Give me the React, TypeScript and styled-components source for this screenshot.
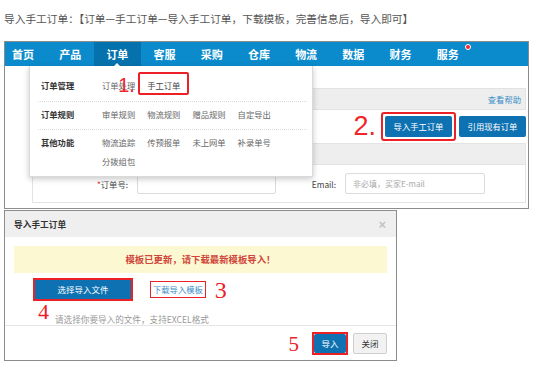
import styled, { createGlobalStyle } from 'styled-components';

const GlobalStyle = createGlobalStyle`
  html, body {
    margin: 0;
    padding: 0;
    background: #ffffff;
  }
  body {
    width: 554px;
    height: 369px;
    overflow: hidden;
    font-family: 'Noto Sans CJK SC', 'Noto Sans', sans-serif;
  }
  * {
    box-sizing: border-box;
  }
`;

const navItems = ['首页', '产品', '订单', '客服', '采购', '仓库', '物流', '数据', '财务', '服务'];

const menuGroups = [
  { title: '订单管理', items: ['订单处理', '手工订单'] },
  { title: '订单规则', items: ['审单规则', '物流规则', '赠品规则', '自定导出'] },
  { title: '其他功能', items: ['物流追踪', '传预报单', '未上网单', '补录单号', '分拨组包'] },
];

const App = () => {
  return (
    <>
      <GlobalStyle />
      <Page>
        <Intro>导入手工订单：【订单—手工订单—导入手工订单，下载模板，完善信息后，导入即可】</Intro>

        <ShotFrame>
          <NavBar>
            {navItems.map((name, index) => (
              <NavItem key={name} $active={name === '订单'} $first={index === 0}>
                {name}
                {name === '服务' && <RedDot />}
              </NavItem>
            ))}
          </NavBar>

          <ShotBody>
            <Content>
              <HelpBar>
                <HelpLink>查看帮助</HelpLink>
              </HelpBar>

              <ButtonRow>
                <StepNumber>2.</StepNumber>
                <RedBox>
                  <BlueButton $width={67}>导入手工订单</BlueButton>
                </RedBox>
                <BlueButton $width={67}>引用现有订单</BlueButton>
              </ButtonRow>

              <FormPanel>
                <PanelHeader />
                <FormRow>
                  <FieldLabel $width={95}>
                    <Required>*</Required>订单号:
                  </FieldLabel>
                  <TextInput $width={139} />
                  <FieldLabel $width={60}>Email:</FieldLabel>
                  <TextInput $width={140}>非必填，买家E-mail</TextInput>
                </FormRow>
              </FormPanel>
            </Content>

            <Dropdown>
              {menuGroups.map((group, index) => (
                <MenuGroup key={group.title} $last={index === menuGroups.length - 1}>
                  <MenuTitle>{group.title}</MenuTitle>
                  <MenuItems>
                    {group.items.map((item) => (
                      <MenuItem key={item} $marked={item === '手工订单'}>
                        {item}
                        {item === '手工订单' && <StepOne>1.</StepOne>}
                      </MenuItem>
                    ))}
                  </MenuItems>
                </MenuGroup>
              ))}
            </Dropdown>
          </ShotBody>
        </ShotFrame>

        <Dialog>
          <DialogHeader>
            <DialogTitle>导入手工订单</DialogTitle>
            <CloseMark>×</CloseMark>
          </DialogHeader>

          <DialogBody>
            <Banner>模板已更新，请下载最新模板导入！</Banner>

            <UploadRow>
              <RedBox $thin>
                <FileButton>选择导入文件</FileButton>
              </RedBox>
              <LinkBox>下载导入模板</LinkBox>
              <SerifNumber $size={24}>3</SerifNumber>
            </UploadRow>

            <HintRow>
              <SerifNumber $size={22}>4</SerifNumber>
              <Hint>请选择你要导入的文件，支持EXCEL格式</Hint>
            </HintRow>
          </DialogBody>

          <DialogFooter>
            <SerifNumber $size={21}>5</SerifNumber>
            <RedBox $thin>
              <FooterButton $primary>导入</FooterButton>
            </RedBox>
            <FooterButton>关闭</FooterButton>
          </DialogFooter>
        </Dialog>
      </Page>
    </>
  );
};

const Page = styled.div`
  padding: 12px 0 0 4px;
`;

const Intro = styled.div`
  height: 14px;
  line-height: 14px;
  font-size: 10.7px;
  color: #555;
  white-space: nowrap;
`;

const ShotFrame = styled.div`
  margin-top: 15px;
  width: 525px;
  border: 1px solid #8c8c8c;
  background: #fff;
`;

const NavBar = styled.div`
  display: flex;
  height: 24px;
  background: #0b8bcc;
`;

const NavItem = styled.div<{ $active?: boolean; $first?: boolean }>`
  position: relative;
  padding: 0 12.6px 0 ${(p) => (p.$first ? '7px' : '12.6px')};
  line-height: 24px;
  font-size: 11px;
  font-weight: 700;
  color: #fff;
  background: ${(p) => (p.$active ? '#0672ad' : 'transparent')};

  &::after {
    content: '';
    display: ${(p) => (p.$active ? 'block' : 'none')};
    position: absolute;
    left: 50%;
    bottom: 0;
    margin-left: -3px;
    border-left: 3px solid transparent;
    border-right: 3px solid transparent;
    border-bottom: 3px solid #fff;
  }
`;

const RedDot = styled.span`
  position: absolute;
  top: 2px;
  right: 0;
  width: 6px;
  height: 6px;
  border-radius: 50%;
  background: #f0262b;
  border: 1px solid #fff;
`;

const ShotBody = styled.div`
  position: relative;
`;

const Content = styled.div`
  padding: 22px 2px 5px 27px;
`;

const HelpBar = styled.div`
  display: flex;
  justify-content: flex-end;
  align-items: center;
  height: 22px;
  padding-right: 4px;
  background: #eeeeee;
  border: 1px solid #e2e2e2;
`;

const HelpLink = styled.span`
  font-size: 8.3px;
  color: #3a8ec8;
`;

const ButtonRow = styled.div`
  display: flex;
  justify-content: flex-end;
  align-items: center;
  gap: 3px;
  margin-top: 2px;
`;

const StepNumber = styled.span`
  margin-right: 2px;
  font-family: 'Liberation Sans', sans-serif;
  font-size: 27px;
  line-height: 29px;
  color: #f0262b;
`;

const RedBox = styled.div<{ $thin?: boolean }>`
  display: flex;
  padding: ${(p) => (p.$thin ? '0' : '2px')};
  border: 2px solid #ec2027;
  border-radius: ${(p) => (p.$thin ? '0' : '3px')};
`;

const BlueButton = styled.div<{ $width: number }>`
  width: ${(p) => p.$width}px;
  height: 21px;
  line-height: 21px;
  text-align: center;
  font-size: 8.3px;
  color: #fff;
  background: #0e72b2;
  border-radius: 2px;
`;

const FormPanel = styled.div`
  margin-top: 2px;
  border: 1px solid #e3e3e3;
`;

const PanelHeader = styled.div`
  height: 21px;
  background: #eeeeee;
  border-bottom: 1px solid #e3e3e3;
`;

const FormRow = styled.div`
  display: flex;
  align-items: center;
  padding: 8px 0 8px 0;
`;

const FieldLabel = styled.div<{ $width: number }>`
  width: ${(p) => p.$width}px;
  margin-right: 9px;
  text-align: right;
  font-size: 8.3px;
  color: #444;
`;

const Required = styled.span`
  color: #e33;
`;

const TextInput = styled.div<{ $width: number }>`
  width: ${(p) => p.$width}px;
  height: 21px;
  line-height: 19px;
  padding-left: 7px;
  font-size: 8px;
  color: #aaa;
  border: 1px solid #dcdcdc;
  border-radius: 2px;
`;

const Dropdown = styled.div`
  position: absolute;
  top: 0;
  left: 24px;
  width: 284px;
  height: 111px;
  padding: 10px 5px 0 8px;
  background: #fff;
  border: 1px solid #dadada;
  border-top: none;
  box-shadow: 0 2px 6px rgba(0, 0, 0, 0.22);
`;

const MenuGroup = styled.div<{ $last?: boolean }>`
  display: flex;
  padding: 3px 0 ${(p) => (p.$last ? '0' : '5px')} 3px;
  border-bottom: ${(p) => (p.$last ? 'none' : '1px dotted #dcdcdc')};

  &:first-child {
    padding-top: 0;
    padding-bottom: 6px;
  }
`;

const MenuTitle = styled.div`
  width: 61px;
  line-height: 19px;
  font-size: 8.3px;
  font-weight: 700;
  color: #333;
`;

const MenuItems = styled.div`
  display: flex;
  flex-wrap: wrap;
  column-gap: 12px;
  width: 190px;
`;

const MenuItem = styled.div<{ $marked?: boolean }>`
  position: relative;
  line-height: 19px;
  font-size: 8.3px;
  color: ${(p) => (p.$marked ? '#444' : '#666')};

  &::before {
    content: '';
    display: ${(p) => (p.$marked ? 'block' : 'none')};
    position: absolute;
    top: -4px;
    bottom: 0;
    left: -9px;
    right: -9px;
    border: 2px solid #ec2027;
    border-radius: 2px;
  }
`;

const StepOne = styled.span`
  position: absolute;
  left: -29px;
  top: -1px;
  font-family: 'Liberation Sans', sans-serif;
  font-size: 20px;
  line-height: 20px;
  color: #f0262b;
`;

const Dialog = styled.div`
  margin-top: 1px;
  width: 393px;
  border: 1px solid #8c8c8c;
  background: #fff;
`;

const DialogHeader = styled.div`
  display: flex;
  justify-content: space-between;
  align-items: center;
  height: 26px;
  padding: 0 10px 0 9px;
  background: #efefef;
`;

const DialogTitle = styled.div`
  font-size: 8.7px;
  font-weight: 700;
  color: #333;
`;

const CloseMark = styled.div`
  font-family: 'Liberation Sans', sans-serif;
  font-size: 13px;
  font-weight: 700;
  color: #c4c4c4;
`;

const DialogBody = styled.div`
  padding: 9px 9px 0 9px;
`;

const Banner = styled.div`
  height: 27px;
  line-height: 27px;
  text-align: center;
  font-size: 9.4px;
  font-weight: 700;
  color: #d0463c;
  background: #fcf9d2;
`;

const UploadRow = styled.div`
  display: flex;
  align-items: center;
  margin: 5px 0 0 19px;
`;

const FileButton = styled.div`
  width: 96px;
  height: 19px;
  line-height: 19px;
  text-align: center;
  font-size: 8.5px;
  color: #fff;
  background: #0e72b2;
`;

const LinkBox = styled.div`
  margin-left: 17px;
  padding: 0 2px;
  height: 17px;
  line-height: 14px;
  font-size: 8.3px;
  color: #3a8ec8;
  border: 1.5px solid #ec2027;
`;

const SerifNumber = styled.span<{ $size: number }>`
  margin: 0 9px;
  font-family: 'Liberation Serif', serif;
  font-size: ${(p) => p.$size}px;
  line-height: 20px;
  color: #ec2027;
`;

const HintRow = styled.div`
  display: flex;
  align-items: flex-end;
  height: 24px;
  margin-left: 14px;
  margin-right: -9px;

  & > span {
    margin: 0 6px 3px 10px;
  }
`;

const Hint = styled.div`
  line-height: 11px;
  font-size: 8.6px;
  color: #999;
`;

const DialogFooter = styled.div`
  display: flex;
  justify-content: flex-end;
  align-items: center;
  gap: 5px;
  padding: 6px 9px 5px 0;
  border-top: 1px solid #e5e5e5;

  & > span {
    margin: 0 8px 0 0;
  }
`;

const FooterButton = styled.div<{ $primary?: boolean }>`
  width: ${(p) => (p.$primary ? '32px' : '34px')};
  height: ${(p) => (p.$primary ? '19px' : '21px')};
  line-height: 19px;
  text-align: center;
  font-size: 8.5px;
  color: ${(p) => (p.$primary ? '#fff' : '#333')};
  background: ${(p) => (p.$primary ? '#0e72b2' : '#f2f2f2')};
  border: ${(p) => (p.$primary ? 'none' : '1px solid #cfcfcf')};
  border-radius: 2px;
`;

export default App;
